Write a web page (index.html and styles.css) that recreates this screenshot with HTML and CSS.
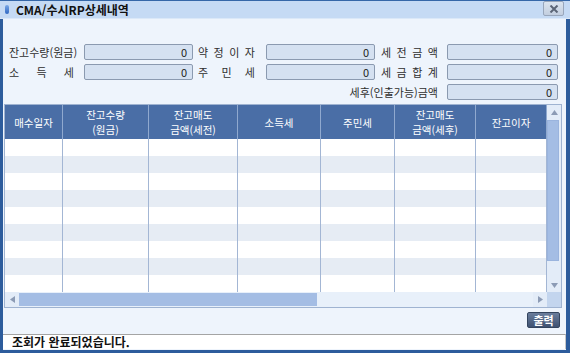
FILE: index.html
```html
<!DOCTYPE html>
<html lang="ko">
<head>
<meta charset="utf-8">
<link rel="stylesheet" href="styles.css">
</head>
<body>
<div class="window">
  <div class="titlebar">
    <span class="title-icon"></span>
    <span class="title">CMA/수시RP상세내역</span>
    <button class="close" type="button"><svg width="10" height="8" viewBox="0 0 10 8"><path d="M1.5 0.5 L8.5 7.5 M8.5 0.5 L1.5 7.5" stroke="#5b6576" stroke-width="2"/></svg></button>
  </div>
  <div class="content">
    <div class="form">
      <div class="lab l1"><span>잔고수량(원금)</span></div>
      <div class="inp">0</div>
      <div class="lab l2"><span class="just">약 정 이 자</span></div>
      <div class="inp">0</div>
      <div class="lab l3"><span class="just">세 전 금 액</span></div>
      <div class="inp">0</div>

      <div class="lab l1"><span class="just wide">소 득 세</span></div>
      <div class="inp">0</div>
      <div class="lab l2"><span class="just">주 민 세</span></div>
      <div class="inp">0</div>
      <div class="lab l3"><span class="just">세 금 합 계</span></div>
      <div class="inp">0</div>

      <div class="lab l3 span5"><span>세후(인출가능)금액</span></div>
      <div class="inp">0</div>
    </div>

    <div class="grid">
      <div class="grid-main">
        <div class="table">
          <div class="hrow">
            <div class="hc">매수일자</div>
            <div class="hc"><span>잔고수량</span><span>(원금)</span></div>
            <div class="hc"><span>잔고매도</span><span>금액(세전)</span></div>
            <div class="hc">소득세</div>
            <div class="hc">주민세</div>
            <div class="hc"><span>잔고매도</span><span>금액(세후)</span></div>
            <div class="hc">잔고이자</div>
          </div>
          <div class="row"><div></div><div></div><div></div><div></div><div></div><div></div><div></div></div>
          <div class="row alt"><div></div><div></div><div></div><div></div><div></div><div></div><div></div></div>
          <div class="row"><div></div><div></div><div></div><div></div><div></div><div></div><div></div></div>
          <div class="row alt"><div></div><div></div><div></div><div></div><div></div><div></div><div></div></div>
          <div class="row"><div></div><div></div><div></div><div></div><div></div><div></div><div></div></div>
          <div class="row alt"><div></div><div></div><div></div><div></div><div></div><div></div><div></div></div>
          <div class="row"><div></div><div></div><div></div><div></div><div></div><div></div><div></div></div>
          <div class="row alt"><div></div><div></div><div></div><div></div><div></div><div></div><div></div></div>
          <div class="row"><div></div><div></div><div></div><div></div><div></div><div></div><div></div></div>
        </div>
        <div class="vscroll">
          <div class="sbtn"><svg width="7" height="5" viewBox="0 0 7 5"><polygon points="3.5,0 7,5 0,5" fill="#8c9bb5"/></svg></div>
          <div class="vthumb"></div>
          <div class="vspace"></div>
          <div class="sbtn"><svg width="7" height="5" viewBox="0 0 7 5"><polygon points="0,0 7,0 3.5,5" fill="#8c9bb5"/></svg></div>
        </div>
      </div>
      <div class="hscroll-row">
        <div class="hscroll">
          <div class="sbtn h"><svg width="5" height="7" viewBox="0 0 5 7"><polygon points="0,3.5 5,0 5,7" fill="#8c9bb5"/></svg></div>
          <div class="hthumb"></div>
          <div class="hspace"></div>
          <div class="sbtn h"><svg width="5" height="7" viewBox="0 0 5 7"><polygon points="0,0 5,3.5 0,7" fill="#8c9bb5"/></svg></div>
        </div>
        <div class="corner"></div>
      </div>
    </div>

    <div class="actions">
      <button class="print" type="button">출력</button>
    </div>

    <div class="status">조회가 완료되었습니다.</div>
  </div>
</div>
</body>
</html>
```

FILE: styles.css
```css
* { box-sizing: border-box; }

body {
  margin: 0;
  font-family: "Noto Sans CJK KR", "Noto Sans", sans-serif;
  font-size: 11px;
  color: #333;
}

.window {
  width: 570px;
  height: 353px;
  display: flex;
  flex-direction: column;
  background: #eef4fc;
  border-bottom: 3px solid #2d5c9c;
}

.titlebar {
  height: 19px;
  flex: none;
  display: flex;
  align-items: center;
  background: #c5daf4;
  border-top: 1px solid #3567a8;
  border-bottom: 1px solid #dbe8f8;
  padding-left: 5px;
  position: relative;
}

.title-icon {
  width: 4px;
  height: 9px;
  border-radius: 2px;
  background: linear-gradient(#7aa8e6, #2f67c2);
  margin-right: 7px;
}

.title {
  font-weight: bold;
  font-size: 12px;
  line-height: 14px;
  color: #111;
}

.close {
  position: absolute;
  right: 6px;
  top: 0;
  width: 21px;
  height: 15px;
  padding: 0;
  border: 1px solid #98a6bb;
  border-radius: 2px;
  background: linear-gradient(#dbe4ef, #c2cedf);
  display: flex;
  align-items: center;
  justify-content: center;
}

.content {
  flex: 1;
  display: flex;
  flex-direction: column;
  border-left: 3px solid #2d5c9c;
  border-right: 4px solid #2d5c9c;
}

.form {
  margin-top: 25px;
  padding-left: 5px;
  display: grid;
  grid-template-columns: 76px 109px 73px 109px 72px 111px;
  grid-auto-rows: 16px;
  row-gap: 4px;
}

.lab {
  display: flex;
  align-items: center;
  line-height: 14px;
  color: #2e2e2e;
  white-space: nowrap;
}

.lab.l1 { padding-left: 1px; }
.lab.l2 { padding-left: 5px; }
.lab.l3 { justify-content: flex-end; padding-right: 9px; }
.lab.span5 { grid-column: 1 / span 5; }

.just {
  display: block;
  width: 57px;
  text-align: justify;
  text-align-last: justify;
}

.just.wide { width: 65px; }

.inp {
  border: 1px solid #8b9ab0;
  border-radius: 2px;
  background: #d5e1f1;
  text-align: right;
  padding-right: 5px;
  line-height: 14px;
  color: #222;
}

.grid {
  margin: 4px 4px 0 1px;
  border: 1px solid #9fb3d1;
  background: #fff;
}

.grid-main {
  display: flex;
}

.table {
  width: 542px;
}

.hrow,
.row {
  display: grid;
  grid-template-columns: 58px 86px 89px 83px 74px 81px 71px;
}

.hrow {
  height: 34px;
  background: #4a6ea6;
}

.hc {
  display: flex;
  flex-direction: column;
  align-items: center;
  justify-content: center;
  text-align: center;
  color: #fff;
  font-size: 10.5px;
  line-height: 15px;
  border-right: 1px solid #90a9cf;
}

.hc span {
  display: block;
  height: 15px;
  line-height: 15px;
}

.row {
  height: 17px;
}

.row > div {
  border-right: 1px solid #a3b6d4;
}

.row.alt {
  background: #e6ecf4;
}

.vscroll {
  width: 14px;
  display: flex;
  flex-direction: column;
  background: #e3ecf8;
}

.sbtn {
  width: 14px;
  height: 14px;
  flex: none;
  display: flex;
  align-items: center;
  justify-content: center;
  background: #e3ecf8;
}

.sbtn.h {
  height: 15px;
}

.vthumb {
  height: 141px;
  margin: 1px 2px 0 0;
  background: #a4bde4;
  border: 1px solid #9ab4de;
}

.vspace { flex: 1; }

.hscroll-row {
  display: flex;
  height: 15px;
}

.hscroll {
  width: 542px;
  display: flex;
  background: #e8f0fa;
}

.hthumb {
  width: 298px;
  margin: 1px 0 1px;
  background: #a4bde4;
}

.hspace { flex: 1; }

.corner {
  width: 14px;
  background: #c3d5ee;
}

.actions {
  margin-top: 4px;
  display: flex;
  justify-content: flex-end;
  padding-right: 6px;
}

.print {
  width: 33px;
  height: 16px;
  padding: 0;
  border: 1px solid #34455f;
  border-radius: 2px;
  background: linear-gradient(#6a7d9c, #3f5272);
  color: #fff;
  font-family: "Noto Sans CJK KR", sans-serif;
  font-size: 11px;
  font-weight: bold;
  line-height: 13px;
}

.status {
  margin-top: 6px;
  height: 15px;
  border-top: 1px solid #a4a4a4;
  border-right: 1px solid #c8c8c8;
  background: #fff;
  padding-left: 9px;
  font-weight: bold;
  font-size: 12px;
  line-height: 14px;
  color: #111;
}
```
